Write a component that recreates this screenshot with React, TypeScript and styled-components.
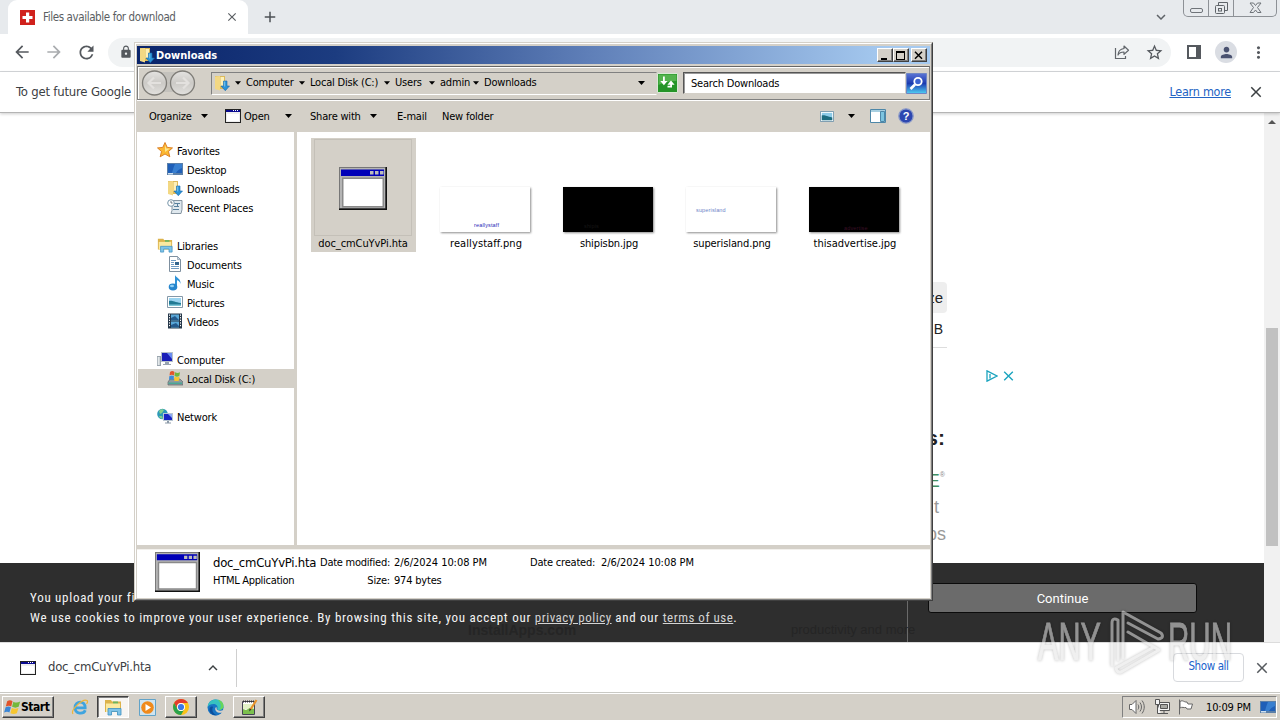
import React from "react";
import styled, { createGlobalStyle, css } from "styled-components";
import {
  MdAdd,
  MdArrowBack,
  MdArrowForward,
  MdClose,
  MdExpandLess,
  MdExpandMore,
  MdLock,
  MdMoreVert,
  MdPerson,
  MdRefresh,
  MdStarBorder,
} from "react-icons/md";

const GlobalStyle = createGlobalStyle`
  * {
    box-sizing: border-box;
  }
  body {
    margin: 0;
    overflow: hidden;
    font-family: "DejaVu Sans Condensed", "DejaVu Sans", sans-serif;
    font-stretch: condensed;
    font-size: 11px;
    color: #000;
  }
  svg {
    display: block;
    flex: none;
  }
`;

const Desktop = styled.div`
  position: relative;
  display: flex;
  flex-direction: column;
  width: 1280px;
  height: 720px;
  overflow: hidden;
  background: #fff;
`;

const Text = styled.span<{ $w?: number; $ls?: number }>`
  flex: none;
  white-space: nowrap;
  width: ${(p) => (p.$w ? p.$w + "px" : "auto")};
  letter-spacing: ${(p) => p.$ls ?? -0.2}px;
`;

const Gap = styled.div<{ $w: number }>`
  flex: none;
  width: ${(p) => p.$w}px;
`;

const Spacer = styled.div`
  flex: 1;
`;

/* browser */

const TabStrip = styled.div`
  display: flex;
  height: 34px;
  padding-left: 8px;
  background: #e7eaed;
`;

const Tab = styled.div`
  display: flex;
  align-items: center;
  width: 240px;
  padding: 0 9px 0 12px;
  background: #fff;
  border-radius: 9px 9px 0 0;
  color: #5a5e62;
`;

const TabTitle = styled(Text)`
  flex: 1;
  margin-left: 8px;
  font-size: 11.5px;
`;

const NewTab = styled.div`
  display: flex;
  flex: 1;
  align-items: center;
  padding-left: 13px;
  color: #4d5156;
`;

const TabSearch = styled.div`
  display: flex;
  align-items: center;
  width: 31px;
  color: #5f6368;
`;

const Caption = styled.div`
  display: flex;
  width: 94px;
  height: 17px;
  margin-right: 3px;
  border: 1px solid #8d9196;
  border-top: 0;
  border-radius: 0 0 5px 5px;
`;

const CaptionCell = styled.div<{ $w: number }>`
  display: flex;
  justify-content: center;
  align-items: center;
  width: ${(p) => p.$w}px;
  border-right: 1px solid #8d9196;
  &:last-child {
    border-right: 0;
  }
`;

const NavRow = styled.div`
  display: flex;
  align-items: center;
  height: 38px;
  padding: 0 0 1px 12px;
  border-bottom: 1px solid #d6d8db;
  color: #55595e;
`;

const NavIcon = styled.div<{ $w?: number; $color?: string }>`
  display: flex;
  flex: none;
  justify-content: center;
  width: ${(p) => p.$w ?? 32}px;
  color: ${(p) => p.$color ?? "#55595e"};
`;

const Omnibox = styled.div`
  display: flex;
  align-items: center;
  width: 1063px;
  height: 29px;
  margin: 0 7px 0 0;
  padding: 0 1px 0 11px;
  border-radius: 15px;
  background: #f1f3f4;
`;

const Avatar = styled.div`
  display: flex;
  justify-content: center;
  align-items: center;
  width: 22px;
  height: 22px;
  border-radius: 11px;
  background: #dadde3;
  color: #4a5270;
`;

const InfoBar = styled.div`
  position: relative;
  z-index: 1;
  display: flex;
  align-items: center;
  height: 41px;
  padding: 0 15px 1px 16px;
  border-bottom: 1px solid #b4b4b4;
  box-shadow: 0 1px 3px rgba(0, 0, 0, 0.2);
  font-size: 13px;
  color: #3c4043;
`;

const LearnMore = styled.a`
  margin-right: 16px;
  color: #2363c4;
  font-size: 12.5px;
  letter-spacing: -0.25px;
  text-decoration: underline;
`;

const Viewport = styled.div`
  display: flex;
  height: 529px;
`;

const Site = styled.div`
  display: flex;
  flex-direction: column;
  width: 1264px;
`;

const SiteBody = styled.div`
  display: flex;
  flex: 1;
  font-family: "Liberation Sans", sans-serif;
  color: #222;
`;

const SiteColumn = styled.div`
  display: flex;
  flex-direction: column;
  width: 947px;
  padding-top: 169px;
  text-align: right;
`;

const SizeHead = styled.div`
  align-self: flex-end;
  width: 40px;
  height: 31px;
  padding-right: 4px;
  border-radius: 4px;
  background: #eee;
  font-size: 15px;
  line-height: 31px;
`;

const SizeCell = styled.div`
  align-self: flex-end;
  width: 40px;
  height: 35px;
  padding-right: 4px;
  border-bottom: 1px solid #ddd;
  font-size: 14px;
  line-height: 32px;
`;

const AppsHead = styled.div`
  margin-top: 76px;
  padding-right: 2px;
  font: bold 21px/28px "Liberation Sans", sans-serif;
`;

const AppsBrand = styled.div`
  display: flex;
  justify-content: flex-end;
  margin-top: 16px;
  padding-right: 2px;
  font-size: 18px;
  line-height: 26px;
  color: #3f8f62;
  sup {
    font-size: 7px;
    line-height: 14px;
    color: #888;
  }
`;

const AppsText = styled.div<{ $pad: number }>`
  padding-right: ${(p) => p.$pad}px;
  font-size: 18px;
  line-height: 27px;
  color: #999;
`;

const AdMark = styled.div`
  display: flex;
  gap: 5px;
  height: 12px;
  margin: 257px 0 0 39px;
`;

const CookieBar = styled.div`
  display: flex;
  height: 79px;
  background: #2e2e2e;
  color: #f4f4f4;
  font-family: Roboto, "Liberation Sans", sans-serif;
  font-size: 13px;
`;

const CookieText = styled.div`
  flex: none;
  width: 908px;
  padding: 25px 0 0 30px;
  border-right: 1px solid #6a6a6a;
  line-height: 20px;
  letter-spacing: 0.72px;
  white-space: nowrap;
  a {
    color: #d4d4d4;
    letter-spacing: 0.5px;
    text-decoration: underline;
  }
`;

const GhostText = styled.div`
  display: flex;
  margin: -4px 0 0 438px;
  color: #252525;
  font-family: "Liberation Sans", sans-serif;
  line-height: 12px;
  letter-spacing: 0;
`;

const GhostBrand = styled.span`
  flex: none;
  width: 323px;
  font-size: 14px;
  font-weight: bold;
`;

const ContinueButton = styled.button`
  width: 269px;
  height: 30px;
  margin: 20px 0 0 20px;
  padding: 0;
  border: 1px solid #0b0b0b;
  border-radius: 3px;
  background: #6b6b6b;
  color: #fff;
  font: 13px Roboto, "Liberation Sans", sans-serif;
  letter-spacing: 0;
`;

const ScrollTrack = styled.div`
  display: flex;
  flex-direction: column;
  align-items: center;
  width: 16px;
  padding-top: 7px;
  background: #f1f1f1;
`;

const ScrollThumb = styled.div`
  width: 12px;
  height: 218px;
  margin-top: 204px;
  background: #c1c1c1;
`;

const DownloadShelf = styled.div`
  display: flex;
  align-items: center;
  height: 51px;
  border-top: 1px solid #dcdcdc;
  border-bottom: 1px solid #c9c9c4;
  color: #3c4043;
`;

const ShelfItem = styled.div`
  display: flex;
  align-items: center;
  width: 237px;
  height: 38px;
  padding: 0 14px 0 20px;
  border-right: 1px solid #cfcfcf;
  font-size: 13px;
`;

const ShelfName = styled(Text)`
  margin: 0 0 3px 12px;
`;

const ShowAll = styled.button`
  width: 71px;
  height: 29px;
  margin-right: 10px;
  padding: 0 0 3px;
  border: 1px solid #d8dade;
  border-radius: 4px;
  background: transparent;
  color: #1a5fcb;
  font: 11.5px "DejaVu Sans Condensed", "DejaVu Sans", sans-serif;
  font-stretch: condensed;
  letter-spacing: -0.4px;
`;

/* explorer window */

const Window = styled.div`
  position: absolute;
  left: 134px;
  top: 42px;
  z-index: 2;
  width: 799px;
  height: 559px;
  border: 1px solid;
  border-color: #d4d0c8 #404040 #404040 #d4d0c8;
`;

const WindowFrame = styled.div`
  display: flex;
  flex-direction: column;
  height: 100%;
  padding: 2px 1px 1px 1px;
  border: 1px solid;
  border-color: #fff #808080 #808080 #fff;
  background: #d4d0c8;
`;

const TitleBar = styled.div`
  display: flex;
  align-items: center;
  height: 18px;
  padding: 0 3px 0 2px;
  background: linear-gradient(90deg, #0a246a 0%, #1c3c80 25%, #5f7fb8 57%, #a6caf0 95%);
  color: #fff;
  font-weight: bold;
`;

const raised = css`
  border: 1px solid;
  border-color: #fff #404040 #404040 #fff;
  box-shadow: inset -1px -1px 0 #808080;
  background: #d4d0c8;
`;

const CaptionButton = styled.div<{ $gap?: boolean }>`
  display: flex;
  justify-content: center;
  align-items: center;
  width: 16px;
  height: 14px;
  margin-left: ${(p) => (p.$gap ? 2 : 0)}px;
  ${raised}
`;

const AddressRow = styled.div`
  display: flex;
  align-items: center;
  height: 34px;
  margin-top: 2px;
  padding-left: 3px;
  border: 1px solid;
  border-color: #666 #808080 #808080 #808080;
  box-shadow: inset 1px 1px 0 #fff, 0 1px 0 #fff;
`;

const AddressField = styled.div`
  display: flex;
  align-items: center;
  width: 446px;
  height: 23px;
  margin-left: 14px;
  padding-left: 2px;
  border: 1px solid;
  border-color: #808080 #d4d0c8 #fff #808080;
`;

const Crumb = styled.div<{ $w: number }>`
  display: flex;
  align-items: center;
  width: ${(p) => p.$w}px;
  svg {
    margin-right: 5px;
  }
  span {
    margin-bottom: 2px;
  }
`;

const SearchField = styled.div`
  display: flex;
  align-items: center;
  width: 223px;
  height: 22px;
  margin-left: 5px;
  padding-left: 7px;
  border: 1px solid;
  border-color: #555 #d4d0c8 #d4d0c8 #555;
  box-shadow: inset 1px 1px 0 #999;
  background: #fff;
`;

const Commands = styled.div`
  display: flex;
  align-items: center;
  height: 32px;
  padding-left: 12px;
`;

const Panes = styled.div`
  display: flex;
  height: 413px;
  background: #fff;
`;

const Sidebar = styled.div`
  width: 160px;
  padding-top: 9px;
  border-right: 3px solid #d4d0c8;
`;

const TreeRow = styled.div<{ $level: number; $active?: boolean }>`
  display: flex;
  align-items: center;
  gap: 4px;
  height: 19px;
  margin-left: 1px;
  padding-left: ${(p) => (p.$level ? 29 : 19)}px;
  background: ${(p) => (p.$active ? "#d4d0c8" : "transparent")};
  svg {
    margin-bottom: 1px;
  }
  span {
    margin-top: 2px;
  }
`;

const Files = styled.div`
  display: flex;
  gap: 18px;
  padding: 6px 0 0 14px;
`;

const File = styled.div<{ $active?: boolean }>`
  display: flex;
  flex-direction: column;
  align-items: center;
  width: 105px;
  height: 114px;
  padding: 1px ${(p) => (p.$active ? 1 : 3)}px 0 0;
  background: ${(p) => (p.$active ? "#d4d0c8" : "transparent")};
`;

const Thumb = styled.div<{ $active?: boolean }>`
  display: flex;
  justify-content: center;
  align-items: ${(p) => (p.$active ? "center" : "flex-end")};
  width: 98px;
  height: 97px;
  margin-bottom: 1px;
  padding: ${(p) => (p.$active ? "2px 0 0" : "0 0 3px")};
  border: 1px solid ${(p) => (p.$active ? "#c4c0b8" : "transparent")};
`;

const PictureName = styled(Text)`
  padding-left: 2px;
`;

const Picture = styled.div<{ $dark?: boolean; $top: number; $left: number; $ink: string }>`
  width: 90px;
  height: 45px;
  padding: ${(p) => p.$top}px 0 0 ${(p) => p.$left}px;
  background: ${(p) => (p.$dark ? "#000" : "#fff")};
  box-shadow: 1px 1px 2px rgba(0, 0, 0, 0.45);
  color: ${(p) => p.$ink};
  font: 5.5px/7px "Liberation Sans", sans-serif;
  letter-spacing: 0.15px;
`;

const Details = styled.div`
  display: flex;
  height: 49px;
  margin-top: 4px;
  padding: 2px 0 0 18px;
  border-top: 1px solid #f2f0ec;
  background: #fff;
`;

const DetailColumn = styled.div<{ $w: number; $right?: boolean }>`
  display: flex;
  flex: none;
  flex-direction: column;
  align-items: ${(p) => (p.$right ? "flex-end" : "flex-start")};
  width: ${(p) => p.$w}px;
  padding-top: 2px;
  line-height: 18px;
`;

const FileName = styled(Text)`
  font-size: 13px;
`;

/* taskbar */

const Taskbar = styled.div`
  display: flex;
  align-items: center;
  height: 27px;
  padding: 1px 3px 1px 2px;
  border-top: 1px solid #fff;
  background: #d4d0c8;
`;

const StartButton = styled.div`
  display: flex;
  align-items: center;
  width: 52px;
  height: 22px;
  margin-right: 11px;
  padding-left: 1px;
  font-weight: bold;
  font-size: 12px;
  ${raised}
`;

const TaskButton = styled.div<{ $state?: "open" | "active" }>`
  display: flex;
  justify-content: center;
  align-items: center;
  width: 32px;
  height: 22px;
  margin-right: 2px;
  border: 1px solid transparent;
  ${(p) => p.$state === "open" && raised}
  ${(p) =>
    p.$state === "active" &&
    css`
      border-color: #404040 #fff #fff #404040;
      box-shadow: inset 1px 1px 0 #808080;
      background: #f7f5f2;
    `}
`;

const Tray = styled.div`
  display: flex;
  align-items: center;
  width: 155px;
  height: 22px;
  padding-left: 6px;
  border: 1px solid;
  border-color: #808080 #fff #fff #808080;
`;

const Watermark = styled.svg`
  position: absolute;
  left: 1034px;
  top: 606px;
  z-index: 3;
  opacity: 0.55;
  filter: drop-shadow(0 0 1.5px rgba(0, 0, 0, 0.45));
`;

/* icons */

const Caret = ({ size = 7 }: { size?: number }) => (
  <svg width={size} height="4" viewBox="0 0 7 4">
    <path d="M0 0h7L3.500 4z" />
  </svg>
);

const AppIcon = ({ w, h }: { w: number; h: number }) => (
  <svg width={w} height={h} viewBox="0 0 48 43" preserveAspectRatio="none">
    <path fill="#777" d="M0 0h48v43H0z" />
    <path fill="#111" d="M46.500 0H48v43H0v-1.500h46.500z" />
    <path fill="#b4b4b4" d="M1 1h45v40H1z" />
    <path fill="#0000b8" d="M2 2.500h43v6.500H2z" />
    <path fill="#bbb" d="M31 4h3.500v3.500H31zm5 0h3.500v3.500H36zm5 0h3.500v3.500H41z" />
    <path fill="#8a8a8a" d="M3 10.500h42v30H3z" />
    <path fill="#fff" d="M4.500 12h39v27h-39z" />
  </svg>
);

const SmallAppIcon = () => (
  <svg width="16" height="14" viewBox="0 0 16 14" shapeRendering="crispEdges">
    <path fill="#222" d="M0 0h16v14H0z" />
    <path fill="#eee" d="M1 3h14v10H1z" />
    <path fill="#fff" d="M2 5h12v7H2z" />
    <path fill="#0a0a90" d="M1 1h14v2H1z" />
    <path fill="#fff" d="M8 1h1v1H8zm2 0h1v1h-1zm2 0h1v1h-1z" />
  </svg>
);

const DownloadsIcon = () => (
  <svg width="16" height="16" viewBox="0 0 16 16">
    <path fill="#dcb95a" d="M1 1h10v13H2z" />
    <path fill="#f3d883" d="M1 1.500L6 1v14.500l-5-1.500z" />
    <path fill="#fdf0b8" d="M6.500 2H10v9H6.500z" />
    <path fill="#2a93d8" stroke="#1a6aad" strokeWidth=".6" d="M9.500 6h3.500v5h2.500l-4.200 4.700L7 11h2.500z" />
    <path fill="#7cc6f0" d="M10.200 6.600h1v5h-1z" />
  </svg>
);

const StarIcon = () => (
  <svg width="16" height="16" viewBox="0 0 16 16">
    <path
      fill="#fbb832"
      stroke="#d9781c"
      strokeWidth=".9"
      d="M8 .5l2.200 4.900 5.300.5-4 3.600 1.300 5.300L8 12l-4.800 2.800 1.300-5.300-4-3.600 5.300-.5z"
    />
    <path fill="#fde58d" d="M8 3l1.300 3.500H13L9.500 9 8 10z" />
  </svg>
);

const ScreenIcon = () => (
  <svg width="16" height="16" viewBox="0 0 16 16">
    <path fill="#5b7fa8" d="M0 2h16v12H0z" />
    <path fill="#1f5fb8" d="M1 3h14v9H1z" />
    <path fill="#4a94e0" d="M8 3h7v4c-3 1-5 3-6 5H5c1-4 2-7 3-9z" opacity=".6" />
    <path fill="#cfe0ee" d="M1 12h5v1.500H1z" />
  </svg>
);

const RecentIcon = () => (
  <svg width="16" height="16" viewBox="0 0 16 16">
    <path fill="#dfe8ee" stroke="#7b8b98" strokeWidth=".9" d="M5 1.500h10v9l-1 4H4l1-3z" />
    <path stroke="#58809e" d="M7 4.500h6M7 7.500h5M6 10.500h6M10.500 4v4" />
    <circle cx="4" cy="4" r="3.300" fill="#fff" stroke="#7896aa" />
    <path fill="none" stroke="#456" strokeWidth=".8" d="M4 2v2h1.600" />
  </svg>
);

const FolderIcon = ({ size = 16 }: { size?: number }) => (
  <svg width={size} height={size} viewBox="0 0 18 18">
    <path fill="#dcb34c" d="M1 2h6l1 1.500h9V14H1z" />
    <path fill="#6fb45c" d="M9 3.500h5V6H9z" />
    <path fill="#fbe9a0" d="M2 5.500h14V14H2z" />
    <path fill="#7fc3e8" stroke="#3d8fc0" strokeWidth=".8" d="M4 10.500h13V17h-3.500v-3.500h-6V17H4z" />
  </svg>
);

const DocumentIcon = () => (
  <svg width="16" height="16" viewBox="0 0 16 16">
    <path fill="#fff" stroke="#7d8f9f" d="M2.500.5h8l3 3v12h-11z" />
    <path fill="#c8d8e6" stroke="#7d8f9f" strokeWidth=".6" d="M10.500.5v3h3z" />
    <path stroke="#6d9bc4" d="M4 4.500h5M4 6.500h3M4 8.500h3M4 10.500h8M4 12.500h8" />
    <path fill="#32658f" d="M8 6h4v3H8z" />
  </svg>
);

const MusicIcon = () => (
  <svg width="16" height="16" viewBox="0 0 16 16">
    <path fill="#2f93d8" d="M8 0c1 3 6 3 5.500 9-.7-2.500-2.300-3.500-3.500-3.700V12H8z" />
    <ellipse cx="6" cy="12" rx="4.300" ry="3.400" fill="#2585cd" />
    <ellipse cx="5" cy="11" rx="2" ry="1.200" fill="#8ed0f5" />
  </svg>
);

const PicturesIcon = () => (
  <svg width="16" height="12" viewBox="0 0 16 12">
    <path fill="#fff" stroke="#8498a8" d="M.5.5h15v11H.5z" />
    <path fill="#9bd4f0" d="M2 2h12v8H2z" />
    <path fill="#217a94" d="M2 5c3-1 5 1 12 2v3H2z" />
    <path fill="#7cc7d8" d="M2 8.500h12V10H2z" />
  </svg>
);

const VideosIcon = () => (
  <svg width="16" height="16" viewBox="0 0 16 16">
    <path fill="#26384a" d="M1 .5h14v15H1z" />
    <path fill="#5aa8d8" d="M4 1.500h8v6H4zM4 8.500h8v6H4z" />
    <path fill="#245a8c" d="M4 5l4-2 4 4H4zm0 7l5-2 3 3v1H4z" />
    <path stroke="#fff" strokeDasharray="1.300 1.300" d="M2.500 1.500v13M13.500 1.500v13" />
  </svg>
);

const ComputerIcon = () => (
  <svg width="16" height="16" viewBox="0 0 16 16">
    <path fill="#9aa5ae" d="M0 5h4v10H0z" />
    <path fill="#e4e8ea" d="M.7 6h2v8h-2z" />
    <path fill="#b6c0ca" d="M4 1h12v10H4z" />
    <path fill="#1a1fb8" d="M5 2h10v8H5z" />
    <path fill="#6b8cf0" d="M10 2h5v6z" />
    <path fill="#98a4b0" d="M8 11h4v2h2v1H6v-1h2z" />
  </svg>
);

const DiskIcon = () => (
  <svg width="16" height="16" viewBox="0 0 16 16">
    <path fill="#8f9a9e" stroke="#5d686c" strokeWidth=".7" d="M3 9h10l3 3v3H1v-3z" />
    <path fill="#4aa896" d="M1.500 12.500h13.500V14H1.500z" />
    <path fill="#e2562b" d="M3 2c2-1.500 3-1 4.500 0L7 5.500C5.500 4.500 4 4.600 2.500 5.500z" />
    <path fill="#6eb83c" d="M8 2.200c2 1 3 1 5 0l-.7 3.800c-2 1-3 .8-4.800 0z" />
    <path fill="#3c8bd9" d="M2.300 6.200C4 5.400 5.500 5.300 7 6.200L6.500 10C5 9 3.500 9 2 9.800z" />
    <path fill="#f6c52e" d="M7.500 6.600c2 1 3 1 5 0L12 10.400c-2 1-3 .8-4.900 0z" />
  </svg>
);

const NetworkIcon = () => (
  <svg width="16" height="16" viewBox="0 0 16 16">
    <circle cx="5.500" cy="6" r="5.300" fill="#2d9ab8" />
    <path fill="#84d08a" d="M2 3c2-2 4-2 5-1L5 5 3 6zM2 8h3l1 3-3-1z" />
    <path fill="#b9c6d2" d="M6 5h10v8H6z" />
    <path fill="#1a25c4" d="M7 6h8v6H7z" />
    <path fill="#8ba8f4" d="M11 6h4v4z" />
    <path fill="#8c9aa8" d="M10 13h2v1.500h2v1H8v-1h2z" />
  </svg>
);

const HistoryButtons = () => (
  <svg width="56" height="28" viewBox="0 0 56 28">
    <defs>
      <linearGradient id="orb" x1="0" y1="0" x2="0" y2="1">
        <stop offset="0" stopColor="#e4e3e1" />
        <stop offset=".5" stopColor="#cccac6" />
        <stop offset="1" stopColor="#e2e1de" />
      </linearGradient>
    </defs>
    <path fill="#c4c2bd" d="M14 3h28v20H14z" />
    <g fill="url(#orb)" stroke="#7f7d78" strokeWidth="1.300">
      <circle cx="13.500" cy="14" r="12" />
      <circle cx="41.500" cy="14" r="12" />
    </g>
    <g fill="none" stroke="#e3e1de" strokeWidth="2.200">
      <path d="M20 14H8m5-5.500L7.500 14l5.500 5.500M35 14h12m-5-5.500l5.500 5.500-5.500 5.500" />
    </g>
  </svg>
);

const RefreshIcon = () => (
  <svg width="21" height="20" viewBox="0 0 21 20">
    <path fill="#259428" stroke="#d8e8d4" d="M.5.500h20v19H.5z" />
    <path fill="#67c05c" d="M1.500 1.500h18V8c-7 0-12 1-18 4z" opacity=".7" />
    <path fill="#fff" d="M6 3.500h1.800V8h2.700l-3.600 4.300L3.300 8H6zM14 7.500l3.600 4.300H15v2.700h-4.500v-1.700h2.700v-1h-2.800z" />
  </svg>
);

const SearchIcon = () => (
  <svg width="21" height="21" viewBox="0 0 21 21">
    <defs>
      <linearGradient id="glass" x1="0" y1="0" x2="0" y2="1">
        <stop offset="0" stopColor="#5b74d4" />
        <stop offset=".5" stopColor="#1b3bb0" />
        <stop offset="1" stopColor="#4fd0f4" />
      </linearGradient>
    </defs>
    <path fill="url(#glass)" stroke="#6f86c4" d="M.5.500h20v20H.5z" />
    <circle cx="12" cy="8.500" r="3.700" fill="#3c63d0" stroke="#fff" strokeWidth="1.800" />
    <path stroke="#fff" strokeWidth="2.600" d="M9 11.500L4.500 16" />
  </svg>
);

const HelpIcon = () => (
  <svg width="16" height="16" viewBox="0 0 16 16">
    <circle cx="8" cy="8" r="7.200" fill="#2d47b0" stroke="#8a99c8" strokeWidth="1.300" />
    <text x="8" y="12" textAnchor="middle" fill="#fff" fontSize="11" fontWeight="bold" fontFamily="Liberation Sans">
      ?
    </text>
  </svg>
);

const PreviewPaneIcon = () => (
  <svg width="16" height="14" viewBox="0 0 16 14">
    <path fill="#fff" stroke="#4d87a8" d="M.5.500h15v13H.5z" />
    <path fill="#a8cfe0" d="M1 1h14v2H1z" />
    <path fill="#7cc4e0" stroke="#4d87a8" d="M10.500 2.500h4v10h-4z" />
  </svg>
);

const FlagIcon = () => (
  <svg width="17" height="17" viewBox="0 0 16 16">
    <path fill="#e0532a" d="M3 2c2-1.300 3.500-1 5 0L6.800 7C5.300 6 3.800 6 1.700 7z" />
    <path fill="#74b83a" d="M8.800 2.600c2.200 1.200 4.200 1 6.400-.2l-1.400 5c-2 1-4.200 1-6.200 0z" />
    <path fill="#3a86d6" d="M1.500 7.800c2-1 3.500-1 5 0l-1.400 5c-1.500-1-3-1-5 0z" />
    <path fill="#f7c62f" d="M7.400 8.400c2 1 4 1 6.200 0l-1.500 5c-2 1-4.200 1-6.100 0z" />
  </svg>
);

const IeIcon = () => (
  <svg width="18" height="18" viewBox="0 0 18 18">
    <path
      fill="none"
      stroke="#3fa4df"
      strokeWidth="2.800"
      d="M4.500 9.800h9.700C14.500 2 4 2.500 4 9.500s8.500 7 10.300 2.700"
    />
    <path fill="none" stroke="#eeb53a" strokeWidth="1.200" d="M2 16C-1 12 12 0 16 2.500c1 1 .3 2.500-.5 3.500" />
  </svg>
);

const PlayerIcon = () => (
  <svg width="17" height="17" viewBox="0 0 17 17">
    <path fill="#cfe4f0" stroke="#62a3c8" d="M.5.500h16v16H.5z" />
    <circle cx="8.500" cy="8.500" r="6.300" fill="#f08a1c" />
    <path fill="#fff" d="M6.500 5l5.500 3.500L6.500 12z" />
  </svg>
);

const ChromeIcon = () => (
  <svg width="16" height="16" viewBox="0 0 16 16">
    <circle cx="8" cy="8" r="8" fill="#fbc116" />
    <path fill="#e33b2e" d="M1.100 4A8 8 0 0 1 14.900 4H8a4 4 0 0 0-3.500 6z" />
    <path fill="#2aa24c" d="M1.100 4A8 8 0 0 0 8 16l3.500-6A4 4 0 0 1 4.500 10z" />
    <circle cx="8" cy="8" r="4" fill="#fff" />
    <circle cx="8" cy="8" r="3.100" fill="#3b78e7" />
  </svg>
);

const EdgeIcon = () => (
  <svg width="17" height="17" viewBox="0 0 17 17">
    <circle cx="8.500" cy="8.500" r="8" fill="#1874c4" />
    <path
      fill="#36c2c0"
      d="M.7 8C1 2 6 .3 9.500.5c4 .2 7 3 7 6.500 0 2.500-2 4-4.500 4-2 0-2-1-1.500-2C11 7 9 5 6.500 5 4 5 1.500 6 .7 8z"
    />
    <path fill="#68d65a" d="M11 .8c3.500.7 5.600 3.500 5.500 6.500-.2 2-1.700 3.500-4 3.700 2-3 1.500-7-1.500-10.200z" />
    <path fill="#0c4f9c" d="M6 8c-2 4 1 8 5 8.200C7 17 2 14.500 2.500 10 2.800 8 4.500 7 6 8z" />
    <path fill="#d4d0c8" d="M10 8.500c-1.500 2 1.500 4.500 7 2.300-.3 1.400-1 2-1.500 2.600C11.500 15 7 12 8.500 8.500z" />
  </svg>
);

const NotepadIcon = () => (
  <svg width="17" height="17" viewBox="0 0 17 17">
    <path fill="#fff" stroke="#445" d="M1.500 2.500h12v13h-12z" />
    <path fill="#e3f2c8" d="M2 5h11v5H2z" />
    <path fill="#7cc04e" d="M2 10l3 1 4-2 4 1v5H2z" />
    <path stroke="#333" strokeDasharray="1 1" strokeWidth="2" d="M2 2.500h11" />
    <path stroke="#e8932c" strokeWidth="2.200" d="M15.500 1l-6 9.500" />
    <path fill="#333" d="M8.500 9.500l2 1-2.300 2z" />
  </svg>
);

const ShareIcon = () => (
  <svg width="16" height="16" viewBox="0 0 16 16" fill="none" stroke="#62666b" strokeWidth="1.200">
    <path d="M1.500 4v10.500h10V12" />
    <path d="M10 2l4.500 4.200L10 10.400V8C7 8 5 9 4 11c.2-4 2.500-6 6-6.500z" strokeLinejoin="round" />
  </svg>
);

const treeItems = [
  { name: "Favorites", level: 0, icon: <StarIcon /> },
  { name: "Desktop", level: 1, icon: <ScreenIcon /> },
  { name: "Downloads", level: 1, icon: <DownloadsIcon /> },
  { name: "Recent Places", level: 1, icon: <RecentIcon /> },
  null,
  { name: "Libraries", level: 0, icon: <FolderIcon /> },
  { name: "Documents", level: 1, icon: <DocumentIcon /> },
  { name: "Music", level: 1, icon: <MusicIcon /> },
  { name: "Pictures", level: 1, icon: <PicturesIcon /> },
  { name: "Videos", level: 1, icon: <VideosIcon /> },
  null,
  { name: "Computer", level: 0, icon: <ComputerIcon /> },
  { name: "Local Disk (C:)", level: 1, icon: <DiskIcon />, active: true },
  null,
  { name: "Network", level: 0, icon: <NetworkIcon /> },
];

const crumbs: [string, number][] = [
  ["Computer", 64],
  ["Local Disk (C:)", 85],
  ["Users", 45],
  ["admin", 44],
  ["Downloads", 160],
];

const pictures = [
  { name: "reallystaff.png", text: "reallystaff", dark: false, ink: "#2a2ab8", top: 35, left: 34, ls: 0.1 },
  { name: "shipisbn.jpg", text: "shipis", dark: true, ink: "#161616", top: 36, left: 21, ls: -0.1 },
  { name: "superisland.png", text: "superisland", dark: false, ink: "#6c84c8", top: 20, left: 10, ls: -0.1 },
  { name: "thisadvertise.jpg", text: "advertise", dark: true, ink: "#3a0f26", top: 38, left: 35, ls: 0 },
];

const Browser = () => (
  <>
    <TabStrip>
      <Tab>
        <svg width="15" height="15" viewBox="0 0 15 15">
          <path fill="#d0211c" d="M0 0h15v15H0z" />
          <path fill="#fff" d="M6 2.500h3.200V6h3.300v3H9.200v3.500H6V9H2.500V6H6z" />
        </svg>
        <TabTitle $ls={-0.39}>Files available for download</TabTitle>
        <MdClose size={14} />
      </Tab>
      <NewTab>
        <MdAdd size={18} />
      </NewTab>
      <TabSearch>
        <MdExpandMore size={18} />
      </TabSearch>
      <Caption>
        <CaptionCell $w={25}>
          <svg width="13" height="16" viewBox="0 0 13 16" fill="none" stroke="#6f7479">
            <rect x=".5" y="8.500" width="12" height="4" rx="1.500" />
          </svg>
        </CaptionCell>
        <CaptionCell $w={25}>
          <svg width="13" height="14" viewBox="0 0 13 14" fill="none" stroke="#5f6469">
            <path d="M3.500 4V1.500h9v8H9.500" />
            <rect x=".5" y="4.500" width="9" height="8" rx="1" />
            <rect x="3.500" y="7.500" width="3" height="2.500" />
          </svg>
        </CaptionCell>
        <CaptionCell $w={42}>
          <svg width="13" height="12" viewBox="0 0 13 12" fill="none" stroke="#6f7479">
            <path d="M1 1h3.500l2 2.500 2-2.500H12L8.500 5.500 12 10.500H8.500l-2-2.500-2 2.500H1l3.500-5z" />
          </svg>
        </CaptionCell>
      </Caption>
    </TabStrip>
    <NavRow>
      <NavIcon $w={20}>
        <MdArrowBack size={20} />
      </NavIcon>
      <NavIcon $w={44} $color="#a9acaf">
        <MdArrowForward size={20} />
      </NavIcon>
      <NavIcon $w={20}>
        <MdRefresh size={21} />
      </NavIcon>
      <Gap $w={12} />
      <Omnibox>
        <MdLock size={14} />
        <Spacer />
        <NavIcon>
          <ShareIcon />
        </NavIcon>
        <NavIcon>
          <MdStarBorder size={19} />
        </NavIcon>
      </Omnibox>
      <NavIcon>
        <svg width="14" height="14" viewBox="0 0 14 14">
          <path fill="#55595e" d="M0 0h14v14H0zM2 2v10h7V2z" fillRule="evenodd" />
        </svg>
      </NavIcon>
      <NavIcon>
        <Avatar>
          <MdPerson size={17} />
        </Avatar>
      </NavIcon>
      <NavIcon>
        <MdMoreVert size={19} />
      </NavIcon>
    </NavRow>
    <InfoBar>
      <Text $ls={-0.2}>To get future Google</Text>
      <Spacer />
      <LearnMore>Learn more</LearnMore>
      <MdClose size={18} />
    </InfoBar>
    <Viewport>
      <Site>
        <SiteBody>
          <SiteColumn>
            <SizeHead>ze</SizeHead>
            <SizeCell>B</SizeCell>
            <AppsHead>s:</AppsHead>
            <AppsBrand>
              E<sup>®</sup>
            </AppsBrand>
            <AppsText $pad={8}>t</AppsText>
            <AppsText $pad={1}>ps</AppsText>
          </SiteColumn>
          <AdMark>
            <svg width="12" height="12" viewBox="0 0 12 12" fill="none" stroke="#1ba4bf" strokeWidth="1.300">
              <path d="M1 .8l10 5.200L1 11.200z" />
              <path d="M4 4v4.500" />
            </svg>
            <svg width="11" height="12" viewBox="0 0 10 12" stroke="#1ba4bf" strokeWidth="1.400">
              <path d="M.7 1.700l8.600 8.600M9.300 1.700L.7 10.300" />
            </svg>
          </AdMark>
        </SiteBody>
        <CookieBar>
          <CookieText>
            You upload your fi
            <br />
            We use cookies to improve your user experience. By browsing this site, you accept our{" "}
            <a>privacy policy</a> and our <a>terms of use</a>.
            <GhostText>
              <GhostBrand>InstallApps.com</GhostBrand>
              <span>productivity and more</span>
            </GhostText>
          </CookieText>
          <ContinueButton>Continue</ContinueButton>
        </CookieBar>
      </Site>
      <ScrollTrack>
        <svg width="8" height="4" viewBox="0 0 8 4">
          <path fill="#555" d="M4 0l4 4H0z" />
        </svg>
        <ScrollThumb />
      </ScrollTrack>
    </Viewport>
    <DownloadShelf>
      <ShelfItem>
        <SmallAppIcon />
        <ShelfName $ls={-0.25}>doc_cmCuYvPi.hta</ShelfName>
        <Spacer />
        <MdExpandLess size={18} />
      </ShelfItem>
      <Spacer />
      <ShowAll>Show all</ShowAll>
      <NavIcon $w={16}>
        <MdClose size={18} />
      </NavIcon>
      <Gap $w={10} />
    </DownloadShelf>
  </>
);

const Explorer = () => (
  <Window>
    <WindowFrame>
      <TitleBar>
        <DownloadsIcon />
        <Gap $w={1} />
        <Text $ls={0.02}>Downloads</Text>
        <Spacer />
        <CaptionButton>
          <svg width="10" height="9" viewBox="0 0 10 9">
            <path d="M1 7h6v2H1z" />
          </svg>
        </CaptionButton>
        <CaptionButton>
          <svg width="10" height="9" viewBox="0 0 10 9">
            <path d="M0 0h9v9H0zM1 2v6h7V2z" fillRule="evenodd" />
          </svg>
        </CaptionButton>
        <CaptionButton $gap>
          <svg width="10" height="9" viewBox="0 0 10 9" stroke="#000" strokeWidth="1.500">
            <path d="M1 .8l7 7M8 .8l-7 7" />
          </svg>
        </CaptionButton>
      </TitleBar>
      <AddressRow>
        <HistoryButtons />
        <AddressField>
          <DownloadsIcon />
          <Gap $w={5} />
          {crumbs.map(([name, width]) => (
            <Crumb key={name} $w={width}>
              <Caret size={6} />
              <Text>{name}</Text>
            </Crumb>
          ))}
          <Gap $w={5} />
          <Caret />
        </AddressField>
        <RefreshIcon />
        <SearchField>
          <Text>Search Downloads</Text>
        </SearchField>
        <SearchIcon />
      </AddressRow>
      <Commands>
        <Text $w={52}>Organize</Text>
        <Caret />
        <Gap $w={17} />
        <SmallAppIcon />
        <Gap $w={3} />
        <Text $w={41}>Open</Text>
        <Caret />
        <Gap $w={18} />
        <Text $w={60}>Share with</Text>
        <Caret />
        <Gap $w={20} />
        <Text $w={45}>E-mail</Text>
        <Text>New folder</Text>
        <Spacer />
        <svg width="14" height="11" viewBox="0 0 16 12" preserveAspectRatio="none">
          <path fill="#fff" stroke="#6f93a8" d="M.5.500h15v11H.5z" />
          <path fill="#8ccbe8" d="M2 2h12v8H2z" />
          <path fill="#1c6c80" d="M2 5c4-1 5 1 12 2v3H2z" />
        </svg>
        <Gap $w={14} />
        <Caret />
        <Gap $w={15} />
        <PreviewPaneIcon />
        <Gap $w={12} />
        <HelpIcon />
        <Gap $w={16} />
      </Commands>
      <Panes>
        <Sidebar>
          {treeItems.map((item, index) =>
            item ? (
              <TreeRow key={index} $level={item.level} $active={item.active}>
                {item.icon}
                <Text>{item.name}</Text>
              </TreeRow>
            ) : (
              <TreeRow key={index} $level={0} />
            )
          )}
        </Sidebar>
        <Files>
          <File $active>
            <Thumb $active>
              <AppIcon w={48} h={43} />
            </Thumb>
            <Text $ls={-0.08}>doc_cmCuYvPi.hta</Text>
          </File>
          {pictures.map((pic) => (
            <File key={pic.name}>
              <Thumb>
                <Picture $dark={pic.dark} $top={pic.top} $left={pic.left} $ink={pic.ink}>
                  {pic.text}
                </Picture>
              </Thumb>
              <PictureName $ls={pic.ls}>{pic.name}</PictureName>
            </File>
          ))}
        </Files>
      </Panes>
      <Details>
        <AppIcon w={45} h={40} />
        <Gap $w={13} />
        <DetailColumn $w={104}>
          <FileName $ls={-0.25}>doc_cmCuYvPi.hta</FileName>
          <Text $ls={-0.3}>HTML Application</Text>
        </DetailColumn>
        <DetailColumn $w={73} $right>
          <Text $ls={-0.25}>Date modified:</Text>
          <Text>Size:</Text>
        </DetailColumn>
        <Gap $w={4} />
        <DetailColumn $w={136}>
          <Text $ls={-0.05}>2/6/2024 10:08 PM</Text>
          <Text>974 bytes</Text>
        </DetailColumn>
        <DetailColumn $w={71}>
          <Text>Date created:</Text>
        </DetailColumn>
        <DetailColumn $w={100}>
          <Text $ls={-0.05}>2/6/2024 10:08 PM</Text>
        </DetailColumn>
      </Details>
    </WindowFrame>
  </Window>
);

const App = () => (
  <Desktop>
    <GlobalStyle />
    <Browser />
    <Taskbar>
      <StartButton>
        <FlagIcon />
        <Text $ls={-0.45}>Start</Text>
      </StartButton>
      <NavIcon $w={29}>
        <IeIcon />
      </NavIcon>
      <Gap $w={3} />
      <TaskButton $state="active">
        <FolderIcon size={18} />
      </TaskButton>
      <TaskButton>
        <PlayerIcon />
      </TaskButton>
      <TaskButton $state="open">
        <ChromeIcon />
      </TaskButton>
      <TaskButton>
        <EdgeIcon />
      </TaskButton>
      <TaskButton $state="open">
        <NotepadIcon />
      </TaskButton>
      <Spacer />
      <Tray>
        <svg width="16" height="16" viewBox="0 0 16 16" fill="#fff" stroke="#666">
          <path d="M.5 5.500H3L7 1.500v13L3 10.500H.5z" />
          <path fill="none" d="M9 5.500c1 1.500 1 3.500 0 5M11 3.500c2 3 2 6 0 9M13 1.500c3 4 3 9 0 13" />
        </svg>
        <NavIcon $w={33}>
          <svg width="16" height="16" viewBox="0 0 16 16" fill="#f4f4f4" stroke="#555">
            <path d="M4.500 3.500h11v8h-11z" />
            <path fill="#a9a9a4" d="M6.500 5.500h7v4h-7z" />
            <path d="M7 14.500h7M10 12v2M1.500.5h4v5h-4zM3.500 5.500v9H7" />
          </svg>
        </NavIcon>
        <svg width="16" height="16" viewBox="0 0 16 16" fill="#fff" stroke="#666">
          <path d="M1.500.5v15M2 2.500c3-2 4 1 7 .5l1 2h4.500l-1.500 5H9l-1-1.500c-2 .5-4-1-6 .5z" />
        </svg>
        <Gap $w={12} />
        <Text $w={54} $ls={-0.15}>
          10:09 PM
        </Text>
        <ScreenIcon />
      </Tray>
    </Taskbar>
    <Explorer />
    <Watermark width="204" height="72" viewBox="0 0 204 72">
      <g
        fill="#e4e4e4"
        stroke="#e4e4e4"
        strokeWidth=".8"
        fontFamily="Liberation Sans Narrow, Liberation Sans"
        fontSize="53"
      >
        <text x="4" y="54" textLength="63" lengthAdjust="spacingAndGlyphs">
          ANY
        </text>
        <text x="134" y="54" textLength="64" lengthAdjust="spacingAndGlyphs">
          RUN
        </text>
      </g>
      <g fill="none" stroke="#e4e4e4" strokeWidth="3" strokeLinejoin="round" strokeLinecap="round">
        <path d="M89 52V6l38 21q4 5-3 6L94 17" />
        <path d="M94 26l31 18-38 22q-4 1-5-4l38-21" />
        <path d="M84 54V14q-6-3-6 3v42" />
      </g>
    </Watermark>
  </Desktop>
);

export default App;
